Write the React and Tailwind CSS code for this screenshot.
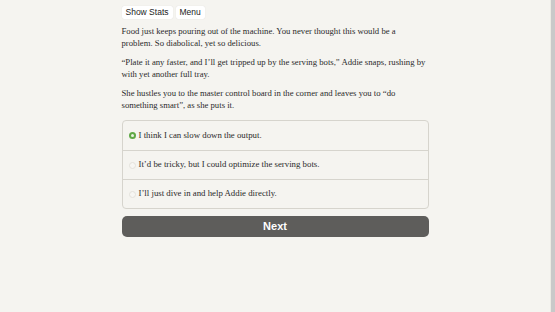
import React from 'react';

const choices = [
  { text: 'I think I can slow down the output.', selected: true },
  { text: 'It’d be tricky, but I could optimize the serving bots.', selected: false },
  { text: 'I’ll just dive in and help Addie directly.', selected: false },
];

const serif = { fontFamily: '"Liberation Serif", serif' };

export default function App() {
  return (
    <div className="flex h-[312px] w-[555px] overflow-hidden bg-[#f5f4f0]">
      <div className="flex-1 border-r border-[#ecebe4]">
        <div className="mx-auto w-[307px] pt-[6px] text-[#2b2b2b]">
          <div className="flex gap-[3px] font-['Liberation_Sans',sans-serif] text-[8.5px] text-[#222]">
            <button className="h-[13px] rounded-[2px] bg-white px-[4px] leading-[13px] shadow-[0_0_1px_rgba(0,0,0,0.15)]">Show Stats</button>
            <button className="h-[13px] rounded-[2px] bg-white px-[4px] leading-[13px] shadow-[0_0_1px_rgba(0,0,0,0.15)]">Menu</button>
          </div>

          <div className="mt-[6px] text-[8.7px] leading-[12px]" style={serif}>
            <p>Food just keeps pouring out of the machine. You never thought this would be a problem. So diabolical, yet so delicious.</p>
            <p className="mt-[7px]">“Plate it any faster, and I’ll get tripped up by the serving bots,” Addie snaps, rushing by with yet another full tray.</p>
            <p className="mt-[7px]">She hustles you to the master control board in the corner and leaves you to “do something smart”, as she puts it.</p>
          </div>

          <div className="mt-[9px] rounded-[4px] border border-[#d6d4cd] text-[8.8px]" style={serif}>
            {choices.map((c, i) => (
              <div key={i} className={`flex h-[29px] items-center gap-[3px] px-[6px] ${i > 0 ? 'border-t border-[#d6d4cd]' : ''}`}>
                {c.selected ? (
                  <span className="flex h-[7px] w-[7px] items-center justify-center rounded-full bg-[#5fa846]">
                    <span className="h-[3px] w-[3px] rounded-full bg-[#e8f2e2]" />
                  </span>
                ) : (
                  <span className="h-[7px] w-[7px] rounded-full border border-[#e4e2dc] bg-[#f7f6f3]" />
                )}
                <span>{c.text}</span>
              </div>
            ))}
          </div>

          <button className="mt-[7px] h-[21px] w-full rounded-[5px] bg-[#5e5d5b] font-['Liberation_Sans',sans-serif] text-[11px] font-bold text-white">
            Next
          </button>
        </div>
      </div>
      <div className="w-[4px] bg-[#c9c9c9]" />
    </div>
  );
}
